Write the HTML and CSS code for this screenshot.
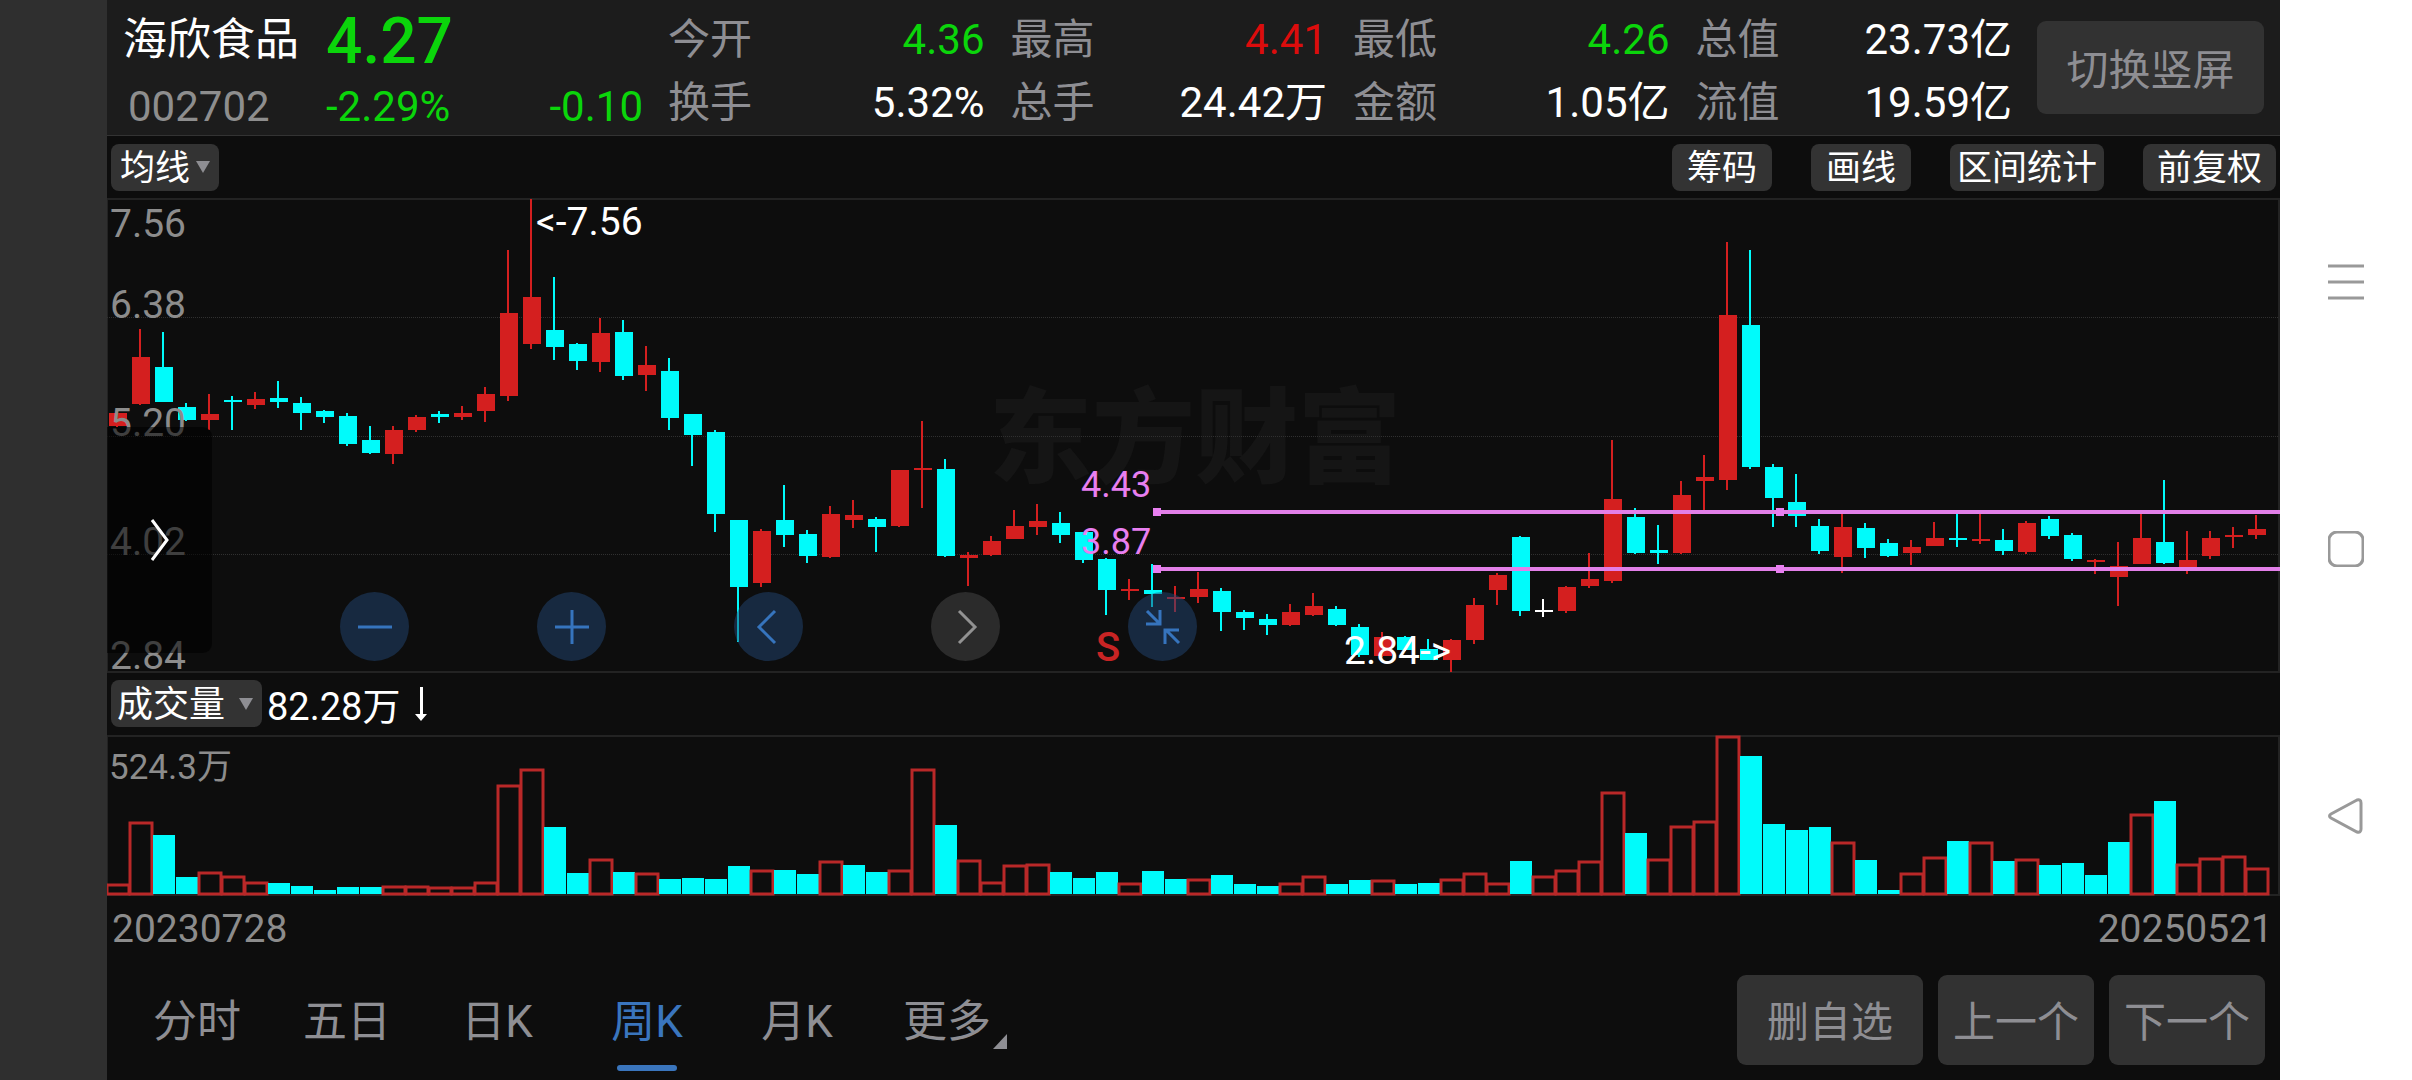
FILE: index.html
```html
<!DOCTYPE html>
<html lang="zh-CN">
<head>
	<meta charset="UTF-8">
	<meta name="viewport" content="width=device-width, initial-scale=1">
	<title>海欣食品 002702</title>
	<link rel="stylesheet" href="styles.css">
</head>
<body>
	<div class="screen">
		<main class="app">
			<header class="quote">
				<div class="stock">
					<h1 class="name">海欣食品</h1>
					<strong class="price down">4.27</strong>
					<span class="code">002702</span>
					<span class="change down"><span>-2.29%</span><span>-0.10</span></span>
				</div>
				<dl class="stats">
					<div><dt>今开</dt><dd class="down">4.36</dd></div>
					<div><dt>最高</dt><dd class="up">4.41</dd></div>
					<div><dt>最低</dt><dd class="down">4.26</dd></div>
					<div><dt>总值</dt><dd>23.73亿</dd></div>
					<div><dt>换手</dt><dd>5.32%</dd></div>
					<div><dt>总手</dt><dd>24.42万</dd></div>
					<div><dt>金额</dt><dd>1.05亿</dd></div>
					<div><dt>流值</dt><dd>19.59亿</dd></div>
				</dl>
				<button type="button" class="btn rotate">切换竖屏</button>
			</header>

			<div class="tools">
				<label class="picker">
					<select aria-label="主图指标"><option>均线</option></select>
					<svg class="caret" viewBox="0 0 14 12"><path d="M0 0h14L7 12z"/></svg>
				</label>
				<div class="tool-list">
					<button type="button" class="tag">筹码</button>
					<button type="button" class="tag">画线</button>
					<button type="button" class="tag tight">区间统计</button>
					<button type="button" class="tag">前复权</button>
				</div>
			</div>

			<section class="kline">
				<svg class="chart" viewBox="0 0 2173 476" role="img" aria-label="周K线">
					<text class="watermark" x="882" y="277">东方财富</text>
					<path class="frame" d="M0 1H2172V474H0z"/>
					<path class="grid" d="M0 119.5H2172M0 238.5H2172M0 356.5H2172"/>
					<g id="candles"></g>
					<g class="axis">
						<text x="3" y="39">7.56</text>
						<text x="3" y="120">6.38</text>
						<text x="3" y="238">5.20</text>
						<text x="3" y="357">4.02</text>
						<text x="3" y="471">2.84</text>
					</g>
					<g class="band">
						<path d="M1050 314H2173M1050 371H2173"/>
						<rect x="1046" y="310" width="8" height="8"/>
						<rect x="1669" y="310" width="8" height="8"/>
						<rect x="1046" y="367" width="8" height="8"/>
						<rect x="1669" y="367" width="8" height="8"/>
						<text x="974" y="299">4.43</text>
						<text x="974" y="356">3.87</text>
					</g>
					<text class="mark" x="429" y="37">&lt;-7.56</text>
					<text class="mark" x="1237" y="466">2.84-&gt;</text>
					<text class="sell" x="989" y="463">S</text>
				</svg>
				<button type="button" class="drawer" aria-label="展开">
					<svg viewBox="0 0 20 42"><path d="M2 1l15 20L2 41"/></svg>
				</button>
				<div class="pad">
					<button type="button" aria-label="缩小"><svg viewBox="0 0 36 36"><path d="M1 18h34"/></svg></button>
					<button type="button" aria-label="放大"><svg viewBox="0 0 36 36"><path d="M1 18h34M18 1v34"/></svg></button>
					<button type="button" aria-label="左移"><svg viewBox="0 0 36 36"><path d="M24 2L8 18l16 16"/></svg></button>
					<button type="button" class="off" aria-label="右移"><svg viewBox="0 0 36 36"><path d="M11 2l16 16-16 16"/></svg></button>
					<button type="button" aria-label="收起"><svg viewBox="0 0 36 36"><path d="M2 2l13 13M1 15h14V1M34 34L21 21M20 35V21h14"/></svg></button>
				</div>
			</section>

			<div class="vol-head">
				<label class="picker">
					<select aria-label="副图指标"><option>成交量</option></select>
					<svg class="caret far" viewBox="0 0 14 12"><path d="M0 0h14L7 12z"/></svg>
				</label>
				<span class="vol-now">82.28万</span>
				<svg class="fall" viewBox="0 0 12 34"><path d="M5 0h3v27h4L6 34 0 27h5z"/></svg>
			</div>

			<svg class="chart" viewBox="0 0 2173 161" role="img" aria-label="成交量">
				<path class="frame" d="M0 1H2172V160H0z"/>
				<g id="volumes"></g>
				<text class="vol-max" x="2" y="44">524.3万</text>
			</svg>
			<div class="dates"><span>20230728</span><span>20250521</span></div>

			<footer class="bottom">
				<nav class="tabs">
					<a href="#">分时</a>
					<a href="#">五日</a>
					<a href="#">日K</a>
					<a href="#" class="active">周K</a>
					<a href="#">月K</a>
					<a href="#" class="more">更多</a>
				</nav>
				<div class="actions">
					<button type="button" class="btn wide">删自选</button>
					<button type="button" class="btn">上一个</button>
					<button type="button" class="btn">下一个</button>
				</div>
			</footer>
		</main>

		<aside class="sysbar">
			<button type="button" aria-label="菜单"><svg viewBox="0 0 36 36"><path d="M0 2h36M0 18h36M0 34h36"/></svg></button>
			<button type="button" aria-label="主页"><svg viewBox="0 0 36 36"><rect x="1" y="1" width="34" height="34" rx="8"/></svg></button>
			<button type="button" aria-label="返回"><svg viewBox="0 0 36 36"><path d="M29 2L3 16q-3 2 0 4l26 14q4 1 4-3V5q0-4-4-3z"/></svg></button>
		</aside>
	</div>
	<script src="chart.js"></script>
</body>
</html>
```
FILE: styles.css
```css
*{box-sizing: border-box;}
body,h1,dl,dd{margin: 0;}
body{background: #2f2f2f; color: #fff; font-family: Roboto, "Noto Sans CJK SC", sans-serif; font-size: 42px;}
button,select{margin: 0; padding: 0; border: none; background: none; color: inherit; font: inherit; cursor: pointer;}
svg{display: block;}
a{color: inherit; text-decoration: none;}

.screen{display: flex; min-height: 100vh; padding-left: 107px;}
.app{flex: 1; min-width: 0; display: flex; flex-direction: column; background: #0d0d0d;}

.up{color: #dc0c0c;}
.down{color: #0bd50b;}

/* 顶部行情 */
.quote{display: flex; align-items: center; height: 136px; padding-right: 16px; background: #1c1c1c; border-bottom: 1px solid #333;}
.stock{display: grid; grid-template-columns: 203px 1fr; width: 536px; padding: 12px 0 0 16px; line-height: 65px;}
.name{font-size: 44px; font-weight: 400; line-height: 62px;}
.price{font-size: 64px; font-weight: 500;}
.code{padding-left: 5px; color: #8e8e8e;}
.change{display: flex; justify-content: space-between;}
.stats{flex: 1; display: grid; grid-template-columns: repeat(4, 1fr); column-gap: 26px; margin: 0 25px; padding-top: 6px; line-height: 63px;}
.stats div{display: flex; justify-content: space-between;}
.stats dt{color: #8e8e93;}
.btn{width: 156px; height: 90px; padding-bottom: 3px; border-radius: 9px; background: #323232; color: #8e8e93; white-space: nowrap;}
.btn.wide{width: 186px;}
.btn.rotate{width: 227px; height: 93px;}

/* 工具条 */
.tools,.vol-head{display: flex; align-items: center; height: 62px; padding: 0 4px; font-size: 35px;}
.tools{justify-content: space-between;}
.tool-list{display: flex; gap: 39px;}
.tag{min-width: 100px; height: 47px; padding: 2px 14px 0; border-radius: 8px; background: #333; line-height: 45px;}
.tag.tight{padding: 2px 7px 0;}
.picker{display: flex; align-items: center; height: 47px; padding: 0 9px; border-radius: 8px; background: #333;}
.picker select{appearance: none; height: 47px; padding-top: 2px; outline: none;}
.caret{width: 14px; height: 12px; margin-left: 5px; fill: #8e8e93;}
.caret.far{margin-left: 13px;}
.vol-head{height: 63px; font-size: 36px;}
.vol-head .picker{padding-left: 6px;}
.vol-now{margin: 0 15px 0 5px; font-size: 38px;}
.fall{width: 12px; height: 34px; fill: #fff;}

/* K线图 */
.kline{position: relative; margin-bottom: -2px;}
.chart{width: 100%; height: auto;}
.frame{fill: none; stroke: #232323; stroke-width: 2;}
.grid{stroke: #303030; stroke-dasharray: 1 1;}
.axis{fill: #8c8c8c; font-size: 39px;}
.mark{fill: #fff; font-size: 39px;}
.sell{fill: #c82424; font-size: 40px; font-weight: 500;}
.watermark{fill: #151515; font-size: 103px; font-weight: 900;}
.band{fill: #e87ff0; font-size: 36px;}
.band path{stroke: #e27fe8; stroke-width: 4;}
.vol-max{fill: #8c8c8c; font-size: 35px;}
.rise{fill: #d41f1f;}
.drop{fill: #00fbfb;}
.flat{fill: #fff;}
.hollow{fill: none; stroke: #b92828; stroke-width: 3;}

.drawer{position: absolute; left: 0; top: 229px; width: 105px; height: 226px; padding-left: 43px; border-radius: 0 9px 9px 0; background: rgba(0,0,0,.55);}
.drawer svg{width: 20px; height: 42px; fill: none; stroke: #fff; stroke-width: 3;}
.pad{position: absolute; left: 233px; bottom: 13px; display: flex; gap: 128px;}
.pad button{display: flex; align-items: center; justify-content: center; width: 69px; height: 69px; border-radius: 50%; background: rgba(33,70,115,.5); color: #3674bd;}
.pad button.off{background: rgba(74,74,74,.5); color: #929292;}
.pad svg{width: 36px; height: 36px; fill: none; stroke: currentColor; stroke-width: 3;}

.dates{display: flex; justify-content: space-between; padding: 0 7px 0 5px; line-height: 66px; font-size: 39px; color: #8c8c8c;}

/* 底部 */
.bottom{flex: 1; display: flex; align-items: center; justify-content: space-between; padding: 0 15px 2px;}
.tabs{display: flex; font-size: 44px; color: #8e8e93;}
.tabs a{position: relative; width: 150px; padding-top: 4px; line-height: 86px; text-align: center;}
.tabs .active{color: #3a75bd;}
.tabs .active:after{content: ''; position: absolute; left: 45px; bottom: -6px; width: 60px; height: 6px; border-radius: 3px; background: #3a75bd;}
.tabs .more:after{content: ''; position: absolute; right: 15px; bottom: 16px; border-left: 14px solid transparent; border-bottom: 15px solid #8e8e93;}
.actions{display: flex; gap: 15px;}

/* 系统导航 */
.sysbar{display: flex; flex-direction: column; align-items: center; justify-content: center; gap: 231px; width: 132px; padding-top: 17px; background: #fff;}
.sysbar svg{width: 36px; height: 36px; fill: none; stroke: #999; stroke-width: 3;}
```
FILE: chart.js
```js
var SVG_NS = 'http://www.w3.org/2000/svg'
	,STEP = 23

// 每周一根: [涨跌, 最高, 实体上沿, 实体下沿, 最低]，自上而下，3 = 一分钱
var candles = [
	['r',668,668,708,712], ['r',418,500,641,644], ['c',425,531,635,635], ['c',639,651,689,692],
	['r',612,672,689,720], ['c',618,630,635,719], ['r',606,627,644,656], ['c',573,624,635,653],
	['c',621,639,668,719], ['c',660,662,680,698], ['c',669,678,761,767], ['c',708,750,788,791],
	['r',708,720,791,821], ['r',675,681,719,725], ['c',663,672,680,698], ['r',648,669,680,689],
	['r',591,612,662,695], ['r',180,370,617,632], ['r',27,322,461,476], ['c',262,419,470,509],
	['c',458,461,512,539], ['r',385,428,515,545], ['c',391,425,557,569], ['r',467,524,554,602],
	['c',503,542,684,719], ['c',671,672,735,827], ['c',720,726,972,1026], ['c',990,991,1190,1357],
	['r',1016,1024,1178,1190], ['c',885,991,1036,1072], ['c',1021,1033,1099,1118], ['r',948,972,1101,1103],
	['r',930,975,990,1015], ['c',982,988,1011,1087], ['r',840,840,1008,1011], ['r',693,834,839,955],
	['c',807,837,1098,1102], ['r',1087,1094,1105,1187], ['r',1039,1054,1094,1097], ['r',961,1009,1048,1048],
	['r',942,994,1011,1036], ['c',967,1000,1036,1060], ['c',1027,1027,1111,1120], ['c',1105,1108,1201,1274],
	['r',1168,1196,1204,1229], ['c',1121,1199,1213,1252], ['r',1187,1220,1227,1265], ['r',1147,1196,1221,1238],
	['c',1195,1202,1265,1322], ['c',1260,1266,1285,1320], ['c',1271,1287,1304,1334], ['r',1242,1266,1304,1309],
	['r',1209,1247,1274,1277], ['c',1248,1257,1306,1307], ['c',1302,1311,1395,1400], ['r',1326,1341,1397,1400],
	['c',1338,1341,1380,1382], ['c',1347,1377,1410,1410], ['r',1347,1350,1410,1447], ['r',1223,1245,1350,1361],
	['r',1150,1155,1199,1244], ['c',1038,1040,1262,1277], ['w',1226,1260,1265,1280], ['r',1187,1190,1262,1268],
	['r',1090,1168,1187,1195], ['r',750,928,1172,1178], ['c',955,982,1090,1091], ['c',1006,1080,1088,1121],
	['r',873,915,1090,1091], ['r',795,861,873,962], ['r',156,374,870,900], ['c',180,404,831,837],
	['c',822,832,924,1010], ['c',852,937,978,1010], ['c',988,1009,1084,1091], ['r',970,1012,1102,1148],
	['c',999,1015,1075,1103], ['c',1048,1060,1099,1101], ['r',1051,1072,1090,1124], ['r',997,1045,1067,1067],
	['c',970,1045,1050,1070], ['r',970,1047,1051,1063], ['c',1018,1051,1084,1094], ['r',993,1000,1087,1093],
	['c',979,988,1039,1046], ['c',1030,1036,1108,1112], ['r',1108,1111,1114,1151], ['r',1057,1127,1160,1247],
	['r',970,1045,1121,1121], ['c',870,1057,1120,1121], ['r',1024,1111,1133,1151], ['r',1024,1045,1097,1108],
	['r',1012,1036,1042,1073], ['r',975,1018,1036,1048]
]

// 成交量柱顶位置，负数为下跌周（实心）
var volumes = [
	641,457,-495,-621,606,618,636,-639,-647,-660,-652,-650,648,648,652,651,
	636,345,296,-472,-608,568,-605,608,-627,-624,-628,-588,600,-600,-613,574,
	-586,-606,600,297,-466,571,636,585,581,-606,-625,-606,638,-604,-627,627,
	-616,-641,-647,640,619,-642,-630,631,-643,-640,628,608,640,-573,617,599,
	572,367,-490,568,469,454,198,-258,-461,-480,-472,516,-570,-659,608,562,
	-513,516,-573,568,-585,-578,-616,-515,432,-394,581,564,557,595
]

var names = {r: 'rise', c: 'drop', w: 'flat'}

function addRect(box, cls, x, y, w, h){
	var el = document.createElementNS(SVG_NS, 'rect')
	el.setAttribute('class', cls)
	el.setAttribute('x', x)
	el.setAttribute('y', y)
	el.setAttribute('width', w)
	el.setAttribute('height', h)
	box.appendChild(el)
}

function toY(v){
	return Math.round((v - 24) / 3)
}

var kBox = document.getElementById('candles')
for (var i = 0; i < candles.length; i++) {
	var c = candles[i]
		,x = 10 + i * STEP
		,cls = names[c[0]]
	addRect(kBox, cls, x - 1, toY(c[1]), 2, toY(c[4]) - toY(c[1]))
	addRect(kBox, cls, x - 8, toY(c[2]), 18, Math.max(2, toY(c[3]) - toY(c[2])))
}

var vBox = document.getElementById('volumes')
for (var j = 0; j < volumes.length; j++) {
	var top1 = Math.round((Math.abs(volumes[j]) - 195) / 3)
		,vx = 10 + j * STEP
	if (volumes[j] < 0) {
		addRect(vBox, 'drop', vx - 10, top1, 22, 159 - top1)
	} else {
		addRect(vBox, 'hollow', vx - 10, top1 + 1, 22, 158 - top1)
	}
}
```
